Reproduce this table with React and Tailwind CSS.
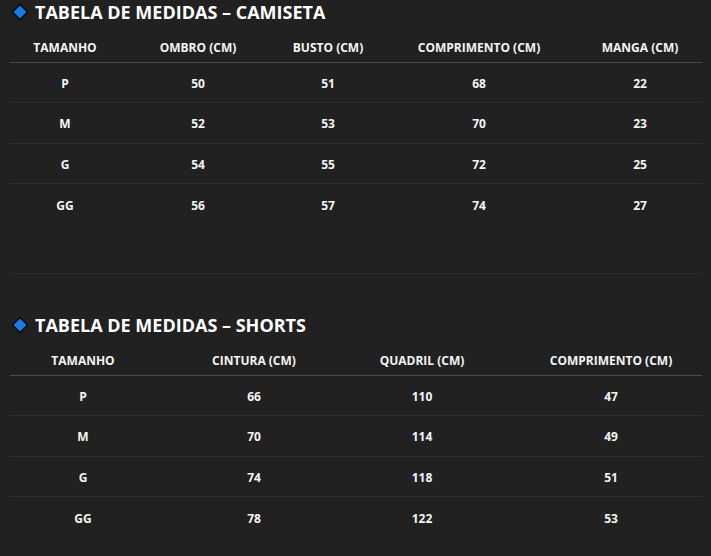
import React from "react";

const camiseta = {
  title: "TABELA DE MEDIDAS – CAMISETA",
  cols: [
    { label: "TAMANHO", w: "w-[110px]" },
    { label: "OMBRO (CM)", w: "w-[156px]" },
    { label: "BUSTO (CM)", w: "w-[104px]" },
    { label: "COMPRIMENTO (CM)", w: "w-[198px]" },
    { label: "MANGA (CM)", w: "w-[124px]" },
  ],
  rows: [
    ["P", "50", "51", "68", "22"],
    ["M", "52", "53", "70", "23"],
    ["G", "54", "55", "72", "25"],
    ["GG", "56", "57", "74", "27"],
  ],
};

const shorts = {
  title: "TABELA DE MEDIDAS – SHORTS",
  cols: [
    { label: "TAMANHO", w: "w-[146px]" },
    { label: "CINTURA (CM)", w: "w-[196px]" },
    { label: "QUADRIL (CM)", w: "w-[168px]", pad: "pr-[28px]" },
    { label: "COMPRIMENTO (CM)", w: "w-[182px]" },
  ],
  rows: [
    ["P", "66", "110", "47"],
    ["M", "70", "114", "49"],
    ["G", "74", "118", "51"],
    ["GG", "78", "122", "53"],
  ],
};

function Diamond() {
  return (
    <svg width="18" height="18" viewBox="0 0 18 18" className="shrink-0">
      <path d="M9 1.5 L16.5 9 L9 16.5 L1.5 9 Z" fill="#1a7ae6" stroke="#0a0a0a" strokeWidth="1.5" />
    </svg>
  );
}

function SizeTable({ data }) {
  return (
    <div>
      <h2 className="flex items-center gap-[6px] h-[24px] pl-[11px] text-[18px] font-bold text-white">
        <Diamond />
        <span>{data.title}</span>
      </h2>
      <table className="mt-[8px] mx-[10px] w-[692px] table-fixed border-collapse text-[12px] font-bold text-[#f4f4f4]">
        <colgroup>
          {data.cols.map((c) => (
            <col key={c.label} className={c.w} />
          ))}
        </colgroup>
        <thead>
          <tr className="h-[30px] border-b border-[#4a4a4a]">
            {data.cols.map((c) => (
              <th key={c.label} className={`text-center font-bold pt-[3px] ${c.pad || ""}`}>
                {c.label}
              </th>
            ))}
          </tr>
        </thead>
        <tbody>
          {data.rows.map((r, i) => (
            <tr
              key={r[0]}
              className={`h-[40.5px] ${i < data.rows.length - 1 ? "border-b border-[#2f2f2f]" : ""}`}
            >
              {r.map((v, j) => (
                <td key={j} className={`text-center pt-[3px] ${data.cols[j].pad || ""}`}>
                  {v}
                </td>
              ))}
            </tr>
          ))}
        </tbody>
      </table>
    </div>
  );
}

export default function App() {
  return (
    <div
      className="w-[711px] h-[556px] overflow-hidden bg-[#212121]"
      style={{ fontFamily: '"Open Sans", "Noto Sans", sans-serif' }}
    >
      <div className="pb-[49px] mx-[10px] border-b border-[#2e2e2e]">
        <div className="-mx-[10px]">
          <SizeTable data={camiseta} />
        </div>
      </div>
      <div className="mt-[39px]">
        <SizeTable data={shorts} />
      </div>
    </div>
  );
}
